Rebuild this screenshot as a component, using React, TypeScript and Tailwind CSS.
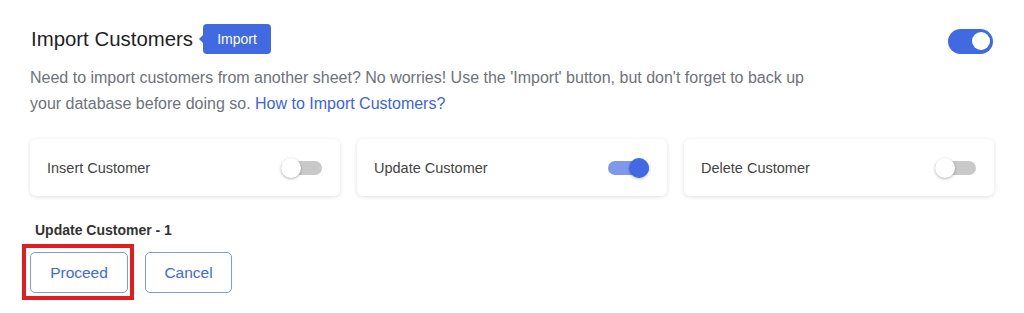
import React from 'react';

interface OptionCardProps {
    label: string;
    on: boolean;
}

const SmallSwitch: React.FC<{ on: boolean }> = ({ on }) => (
    <div className="relative w-[41px] h-[20px] flex items-center">
        <div className={`w-full h-[14px] rounded-full ${on ? 'bg-[#7f98ec]' : 'bg-[#c9c9c9]'}`}></div>
        <div
            className={`absolute top-0 w-[20px] h-[20px] rounded-full ${
                on ? 'right-0 bg-[#4169e1] shadow-[0_1px_3px_rgba(0,0,0,0.25)]' : 'left-0 bg-white shadow-[0_1px_3px_rgba(0,0,0,0.3)]'
            }`}
        ></div>
    </div>
);

const OptionCard: React.FC<OptionCardProps> = ({ label, on }) => (
    <div className="bg-white rounded-md h-[57px] flex items-center justify-between pl-[17px] pr-[18px] shadow-[0_1px_4px_rgba(0,0,0,0.13)]">
        <span className="text-[14.5px] text-[#444] mt-[2px]">{label}</span>
        <SmallSwitch on={on} />
    </div>
);

const App: React.FC = () => {
    const options: OptionCardProps[] = [
        { label: 'Insert Customer', on: false },
        { label: 'Update Customer', on: true },
        { label: 'Delete Customer', on: false },
    ];

    return (
        <div className="w-[1024px] h-[313px] bg-white px-[30px] pt-[24px] font-['Liberation_Sans',Arial,sans-serif]">
            <div className="flex items-center justify-between h-[30px] pr-[1px]">
                <div className="flex items-center">
                    <h1 className="text-[20.4px] text-[#1f1f28] leading-none ml-[1px]">Import Customers</h1>
                    <div className="relative ml-[10px] h-[30px] w-[68px] bg-[#4169e1] rounded-[4px] flex items-center justify-center text-white text-[14px]">
                        <span className="absolute left-[-4px] top-[11px] w-0 h-0 border-y-[4px] border-y-transparent border-r-[4px] border-r-[#4169e1]"></span>
                        Import
                    </div>
                </div>
                <div className="relative w-[45px] h-[25px] rounded-full bg-[#4169e1] mt-[4px]">
                    <div className="absolute right-[3px] top-[3.5px] w-[18px] h-[18px] rounded-full bg-white"></div>
                </div>
            </div>

            <p className="mt-[11px] text-[16px] leading-[26px] text-[#6f727a] w-[785px]">
                Need to import customers from another sheet? No worries! Use the 'Import' button, but don't forget to back up your database before doing so.{' '}
                <a className="text-[#3d64de]">How to Import Customers?</a>
            </p>

            <div className="grid grid-cols-3 gap-[17px] mt-[22px]">
                {options.map((opt, index) => (
                    <OptionCard key={index} label={opt.label} on={opt.on} />
                ))}
            </div>

            <div className="mt-[24px] ml-[5px] text-[14px] leading-[20px] font-bold text-[#333]">Update Customer - 1</div>

            <div className="flex gap-[17px] mt-[12px]">
                <div className="relative">
                    <button className="w-[98px] h-[41px] rounded-[5px] border border-[#7f98ec] text-[#4169e1] text-[15.5px] bg-white">
                        Proceed
                    </button>
                    <div className="absolute left-[-8px] right-[-6px] top-[-8px] bottom-[-7px] border-[4px] border-[#e31b23] pointer-events-none"></div>
                </div>
                <button className="w-[87px] h-[41px] rounded-[5px] border border-[#7f98ec] text-[#4169e1] text-[15.5px] bg-white">
                    Cancel
                </button>
            </div>
        </div>
    );
};

export default App;
